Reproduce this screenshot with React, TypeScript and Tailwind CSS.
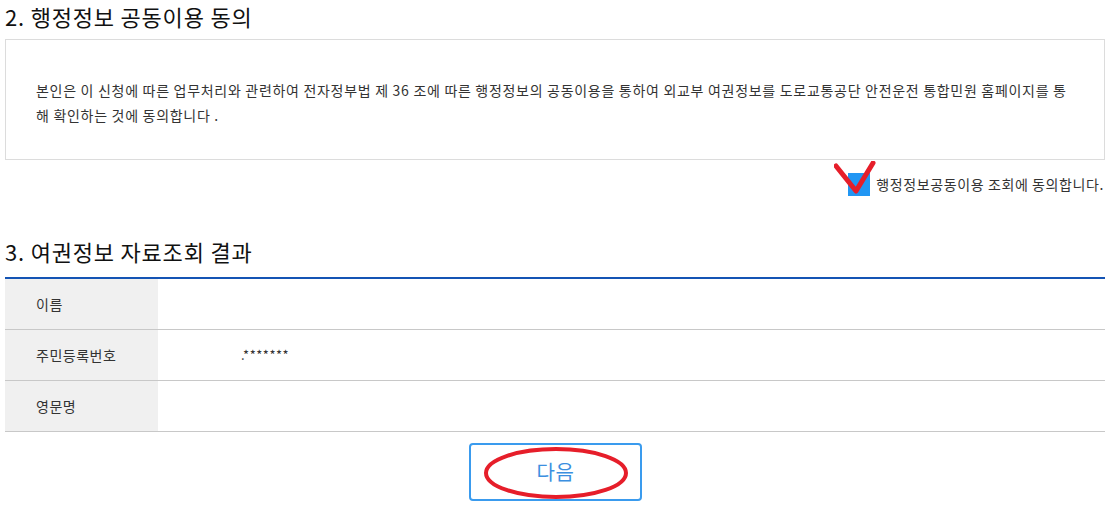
import React from "react";

const font = { fontFamily: '"Noto Sans CJK KR", "Noto Sans", sans-serif' };

export default function App() {
  return (
    <div className="w-[1113px] h-[510px] bg-white pl-[5px] pr-[8px] pt-[1px] text-[#222] overflow-hidden" style={font}>
      <h2 className="text-[22px] leading-[30px] tracking-[0.8px] text-[#111]">2. 행정정보 공동이용 동의</h2>
      <div className="mt-[8px] h-[121px] border border-[#dcdcdc] pl-[30px] pt-[38px] text-[14px] leading-[25px] tracking-[0.7px] text-[#333]">
        <p className="whitespace-nowrap">
          본인은 이 신청에 따른 업무처리와 관련하여 전자정부법 제 36 조에 따른 행정정보의 공동이용을 통하여 외교부 여권정보를 도로교통공단 안전운전 통합민원 홈페이지를 통
        </p>
        <p className="whitespace-nowrap">해 확인하는 것에 동의합니다 .</p>
      </div>
      <div className="mt-[12px] flex justify-end items-center h-[24px] pr-[1px]">
        <div className="relative">
          <span className="block w-[22px] h-[23px] bg-[#2196f3]" />
          <svg className="absolute left-[-14px] top-[-12px]" width="46" height="40" viewBox="0 0 46 40">
            <path d="M2 5 L22 30 L39 2" fill="none" stroke="#e61e2a" strokeWidth="5" strokeLinecap="round" strokeLinejoin="round" />
          </svg>
        </div>
        <span className="ml-[6px] text-[14px] tracking-[0.6px] text-[#333]">행정정보공동이용 조회에 동의합니다.</span>
      </div>
      <h2 className="mt-[40px] text-[22px] leading-[30px] tracking-[0.8px] text-[#111]">3. 여권정보 자료조회 결과</h2>
      <div className="mt-[11px] border-t-2 border-[#1454b4]">
        {[
          ["이름", ""],
          ["주민등록번호", ".*******"],
          ["영문명", ""],
        ].map(([k, v]) => (
          <div key={k} className="flex h-[51px] border-b border-[#c8c8c8]">
            <div className="w-[153px] bg-[#f0f0f0] pl-[31px] flex items-center text-[14px] tracking-[0.5px] text-[#333]">{k}</div>
            <div className="flex-1 pl-[83px] flex items-center text-[13px] tracking-[0.5px] text-[#333]">{v}</div>
          </div>
        ))}
      </div>
      <div className="mt-[11px] flex justify-center pl-[1px]">
        <div className="relative">
          <button className="w-[173px] h-[58px] border-2 border-[#3a9bee] rounded-[4px] bg-white text-[20px] tracking-[0.5px] text-[#3b8fe0]" style={font}>
            다음
          </button>
          <svg className="absolute left-[14px] top-[3px] pointer-events-none" width="146" height="54" viewBox="0 0 146 54">
            <ellipse cx="73" cy="27" rx="70" ry="24" fill="none" stroke="#e61e2a" strokeWidth="4" />
          </svg>
        </div>
      </div>
    </div>
  );
}
